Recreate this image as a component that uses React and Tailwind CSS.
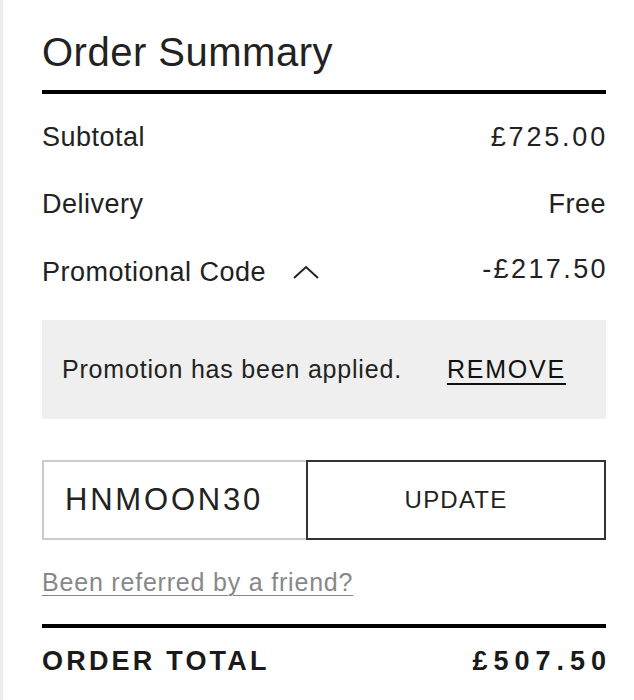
import { useState } from "react";

// order summary panel with promo code applied
const font = { fontFamily: '"Liberation Sans", Arial, sans-serif' };

function ChevronUp() {
  return (
    <svg width="28" height="16" viewBox="0 0 28 16" fill="none" className="ml-[26px]">
      <polyline points="2,14 14,3 26,14" stroke="#222" strokeWidth="2" />
    </svg>
  );
}

export default function App() {
  const [code, setCode] = useState("HNMOON30");

  return (
    <div className="min-h-[700px] bg-white border-l-[3px] border-[#ececec] text-[#222]" style={font}>
      <div className="pl-[39px] pr-[28px] pt-[28px]">
        <h1 className="text-[40px] leading-[48px] font-normal tracking-[0.5px]">Order Summary</h1>
        <div className="mt-[14px] h-[4px] bg-black" />

        {/* summary rows */}
        <div className="mt-[27px] flex justify-between text-[27px] leading-[32px] h-[32px] tracking-[0.5px]">
          <span>Subtotal</span>
          <span className="tracking-[2.8px] -mr-[2px]">£725.00</span>
        </div>
        <div className="mt-[35px] flex justify-between text-[27px] leading-[32px] h-[32px] tracking-[0.5px]">
          <span>Delivery</span>
          <span>Free</span>
        </div>
        <div className="mt-[36px] flex justify-between text-[27px] leading-[32px] h-[32px] tracking-[0.5px]">
          <span className="flex items-center">
            Promotional Code
            <ChevronUp />
          </span>
          <span className="-mt-[3px] tracking-[2.4px] -mr-[2px]">-£217.50</span>
        </div>

        {/* applied promo */}
        <div className="mt-[32px] h-[99px] bg-[#efefef] px-[20px] flex items-center gap-[45px]">
          <span className="text-[25px] tracking-[0.8px]">Promotion has been applied.</span>
          <button className="text-[25px] tracking-[1.8px] underline decoration-2 underline-offset-[5px] text-[#111]">
            REMOVE
          </button>
        </div>

        {/* code input */}
        <div className="mt-[41px] flex h-[80px]">
          <input
            value={code}
            onChange={(e) => setCode(e.target.value)}
            className="w-[266px] h-full border-2 border-[#cccccc] px-[21px] text-[31px] tracking-[2.8px] text-[#222] outline-none"
            style={font}
          />
          <button className="flex-1 -ml-[2px] h-full border-2 border-[#333] text-[24px] tracking-[1.2px] text-[#222]">
            UPDATE
          </button>
        </div>

        <a href="#" className="block mt-[27px] text-[25px] leading-[30px] text-[#888] tracking-[0.8px] underline underline-offset-[4px] decoration-1">
          Been referred by a friend?
        </a>

        <div className="mt-[27px] h-[4px] bg-black" />

        <div className="mt-[17px] flex justify-between text-[27px] leading-[32px] font-bold text-[#1a1a1a]">
          <span className="tracking-[3.2px]">ORDER TOTAL</span>
          <span className="tracking-[6px] -mr-[6px]">£507.50</span>
        </div>
      </div>
    </div>
  );
}
